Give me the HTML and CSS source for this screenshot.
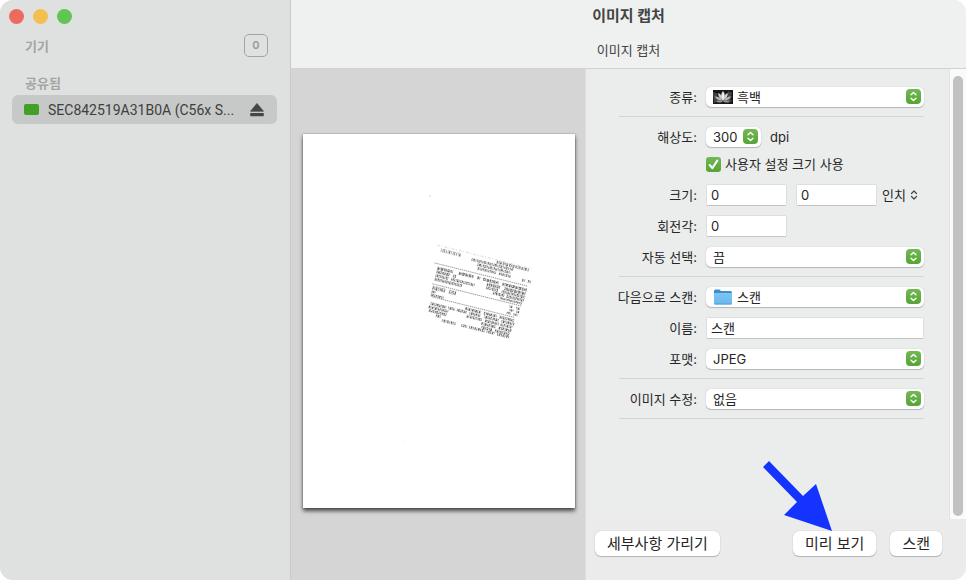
FILE: index.html
```html
<!DOCTYPE html>
<html lang="ko">
<head>
<meta charset="utf-8">
<title>이미지 캡처</title>
<link rel="stylesheet" href="styles.css">
</head>
<body>
<svg class="defs" width="0" height="0" aria-hidden="true">
  <defs>
    <linearGradient id="green" x1="0" y1="0" x2="0" y2="1"><stop offset="0" stop-color="#72b855"/><stop offset="1" stop-color="#56a535"/></linearGradient>
    <linearGradient id="blue" x1="0" y1="0" x2="0" y2="1"><stop offset="0" stop-color="#7cc5f3"/><stop offset="1" stop-color="#69b7ec"/></linearGradient>
    <pattern id="specks" width="7.300" height="3.900" patternUnits="userSpaceOnUse">
      <path d="M.3 1.200H1.800M2.600 2.400H3.700M4.200.6H5.300M5.800 1.900H7M1.200 3.300H2.200M4.500 3.200H6" stroke="#fff" stroke-width="1"/>
    </pattern>
    <symbol id="knob" viewBox="0 0 15 15">
      <rect width="15" height="15" rx="4" fill="url(#green)"/>
      <path d="M5 5.8 7.5 3.5 10 5.8M5 9.2l2.5 2.3L10 9.2" fill="none" stroke="#fff" stroke-width="1.4" stroke-linecap="round" stroke-linejoin="round"/>
    </symbol>
  </defs>
</svg>
<div class="window">
  <aside class="sidebar">
    <div class="lights">
      <button class="light close" aria-label="닫기"></button>
      <button class="light minimize" aria-label="최소화"></button>
      <button class="light expand" aria-label="확대"></button>
    </div>
    <div class="group-head"><h2>기기</h2><span class="count">0</span></div>
    <h2 class="shared">공유됨</h2>
    <div class="device">
      <span class="device-icon"></span>
      <span class="device-name">SEC842519A31B0A (C56x S...</span>
      <button class="eject" aria-label="추출">
        <svg width="14" height="14" viewBox="0 0 14 14"><path d="M7 .5 13.4 8.2H.6Z" fill="#454746" stroke="#454746" stroke-width=".8" stroke-linejoin="round"/><rect x=".2" y="10" width="13.6" height="3.2" rx=".6" fill="#454746"/></svg>
      </button>
    </div>
  </aside>

  <main class="main">
    <header class="titlebar">
      <h1>이미지 캡처</h1>
      <p>이미지 캡처</p>
    </header>
    <div class="content">
      <section class="preview" aria-label="스캔 미리 보기">
        <svg class="page" viewBox="0 0 272 374">
          <circle cx="127" cy="62" r=".6" fill="#aaa"/>
          <circle cx="102" cy="308" r=".4" fill="#bbb"/>
          <g transform="translate(134 111) rotate(14)" fill="none" stroke="#333" opacity=".78">
            <path d="M0 0H98" stroke="#aaa" stroke-width=".5" stroke-dasharray="3 1.5 1 2"/>
            <path d="M5 4H26" stroke-width="3.6" stroke-dasharray=".7 1.1 .6 .6 1.3 1" stroke="#444"/>
            <g stroke-width="2.8" stroke="#444">
              <path d="M62 2.2H95" stroke-dasharray="1.6 .6 .8 .5 2 .9"/>
              <path d="M37 5.6H80M44 9.2H78" stroke-dasharray="1.1 .5 2 .6 .7 .7"/>
              <path d="M45 12.8H64M67 12.8H79M91 13.4H94M97 13.4H100" stroke-dasharray="1.6 .6 .8 .5"/>
            </g>
            <g stroke-width="2.9" stroke="#222">
              <path d="M6 22.3H22M28 22H43M47 22H50M53 22H69M73 22H98" stroke-dasharray="1.8 .5 .8 .5 2.4 .6"/>
              <path d="M6 26H20M23 26H26M58 26H72M76 26H98" stroke-dasharray="1.1 .6 1.9 .5"/>
              <path d="M6 29.8H19M22 29.8H46M58 29.5H70M74 29.5H98" stroke-dasharray=".7 .6 1.4 .5 .8 .7"/>
              <path d="M6 33.6H34M66 33H78M80 33H98" stroke-dasharray="1.2 .6 .7 .5"/>
              <path d="M74 36.3H97" stroke-dasharray="1.7 .6 .7 .5" stroke-width="2"/>
            </g>
            <path d="M6 42.4H19M23 42.4H30" stroke-width="3.8" stroke-dasharray="1.2 .7 .7 .6 1.8 .8"/>
            <path d="M6 46.4H10M6 49.7H19M85 42H88M92 42H96M86 45.4H90M93 45.4H96M84 48.7H88M91 48.7H95" stroke-width="2.4" stroke-dasharray="1 .5 1.6 .5"/>
            <g stroke-width="2.8" stroke="#2a2a2a">
              <path d="M43 54.7H59M62 54.7H75M78 54.7H93" stroke-dasharray="1.5 .6 .8 .5"/>
              <path d="M8 58.2H24M26 58.2H33M35 58.2H45M48 58.2H59M63 58.2H78M81 58.2H94" stroke-dasharray=".8 .6 1.7 .6 1 .5"/>
              <path d="M7 61.8H27M46 61.8H62M65 61.8H79M81 61.8H93" stroke-dasharray="1.4 .5 .7 .6"/>
              <path d="M8 65.4H26M62 65.4H77M80 65.4H93" stroke-dasharray="1.8 .6 .8 .5"/>
              <path d="M16 68.8H21M63 69H74M77 69H92" stroke-dasharray="1 .6 1.6 .6"/>
              <path d="M23 72H37M43 72H49M51 72H67M69 72H77M80 72H92" stroke-dasharray=".8 .8 1.6 .6"/>
            </g>
            <rect y="1" width="102" height="74" fill="url(#specks)" stroke="none"/>
            <path d="M2 18H98M5 38.8H97M7 51.5H93" stroke="#666" stroke-width=".8" stroke-dasharray="1.3 .7"/>
          </g>
        </svg>
      </section>

      <section class="details">
        <div class="scroller">
          <form class="form" id="scan-form">
            <div class="group">
              <div class="row">
                <label for="kind">종류:</label>
                <div class="popup with-icon">
                  <select id="kind"><option>흑백</option></select>
                  <svg class="thumb" viewBox="0 0 20 14">
                    <rect width="20" height="14" fill="#171717"/>
                    <path d="M0 2 5 4 3 7 6 11 1 13ZM15 1l4 2-2 5 2 3-4 2Z" fill="#444"/>
                    <g fill="#bbb" stroke="#555" stroke-width=".3">
                      <path d="M10 11C6 11 3 9 1.5 6.500 5 6 8 8 10 11ZM10 11c4 0 7-2 8.500-4.500C15 6 12 8 10 11Z"/>
                      <path d="M10 11C7 9 5 6 5 3c3 1 5 4 5 8ZM10 11c3-2 5-5 5-8-3 1-5 4-5 8Z" fill="#ddd"/>
                      <path d="M10 11C7.500 8 7.500 4 10 1c2.500 3 2.500 7 0 10Z" fill="#eee"/>
                      <path d="M10 11c-2 2-5 2-7 0 3-1 5-1 7 0Zm0 0c2 2 5 2 7 0-3-1-5-1-7 0Z" fill="#999"/>
                    </g>
                  </svg>
                  <svg class="knob"><use href="#knob"/></svg>
                </div>
              </div>
            </div>

            <div class="group">
              <div class="row">
                <label for="resolution">해상도:</label>
                <div class="inline">
                  <div class="popup short">
                    <select id="resolution"><option>300</option></select>
                    <svg class="knob"><use href="#knob"/></svg>
                  </div>
                  <span>dpi</span>
                </div>
              </div>
              <div class="row check-row">
                <div class="check">
                  <input type="checkbox" id="custom" checked>
                  <svg class="tick" viewBox="0 0 15 15"><path d="m3.700 8 2.600 3.200 5-7.600" fill="none" stroke="#fff" stroke-width="2" stroke-linecap="round" stroke-linejoin="round"/></svg>
                  <label for="custom">사용자 설정 크기 사용</label>
                </div>
              </div>
              <div class="row">
                <label for="width">크기:</label>
                <div class="inline">
                  <input class="field number" id="width" type="text" value="0">
                  <input class="field number" type="text" value="0" aria-label="높이">
                  <div class="unit">
                    <select aria-label="단위"><option>인치</option></select>
                    <svg class="arrows" viewBox="0 0 8 10"><path d="M1.500 3.500 4 1l2.500 2.500M1.500 6.500 4 9l2.500-2.500" fill="none" stroke="#444" stroke-width="1.200" stroke-linecap="round" stroke-linejoin="round"/></svg>
                  </div>
                </div>
              </div>
              <div class="row">
                <label for="angle">회전각:</label>
                <div class="inline"><input class="field number" id="angle" type="text" value="0"></div>
              </div>
              <div class="row">
                <label for="auto">자동 선택:</label>
                <div class="popup">
                  <select id="auto"><option>끔</option></select>
                  <svg class="knob"><use href="#knob"/></svg>
                </div>
              </div>
            </div>

            <div class="group">
              <div class="row">
                <label for="target">다음으로 스캔:</label>
                <div class="popup with-icon">
                  <select id="target"><option>스캔</option></select>
                  <svg class="thumb" viewBox="0 0 20 16">
                    <path d="M1 2Q1 .5 2.500.5H6.500L8 2H17.500Q19 2 19 3.500V14H1Z" fill="#3c8fc9"/>
                    <path d="M1 4H19V14.500Q19 15.500 18 15.500H2Q1 15.500 1 14.500Z" fill="url(#blue)"/>
                    <path d="M1.500 15H18.500" stroke="#4a9bd2" stroke-width=".8"/>
                  </svg>
                  <svg class="knob"><use href="#knob"/></svg>
                </div>
              </div>
              <div class="row">
                <label for="name">이름:</label>
                <input class="field" id="name" type="text" value="스캔">
              </div>
              <div class="row">
                <label for="format">포맷:</label>
                <div class="popup">
                  <select id="format"><option>JPEG</option></select>
                  <svg class="knob"><use href="#knob"/></svg>
                </div>
              </div>
            </div>

            <div class="group">
              <div class="row">
                <label for="correction">이미지 수정:</label>
                <div class="popup">
                  <select id="correction"><option>없음</option></select>
                  <svg class="knob"><use href="#knob"/></svg>
                </div>
              </div>
            </div>
          </form>
          <div class="track"><div class="track-thumb"></div></div>
        </div>
        <footer class="actions">
          <button class="push">세부사항 가리기</button>
          <div class="actions-end">
            <div class="pointed">
              <button class="push">미리 보기</button>
              <svg class="pointer" viewBox="0 0 70 70" aria-hidden="true"><path d="M1 6 7 0 41 35 54 23 70 70 22 54 35 41Z" fill="#1433ff"/></svg>
            </div>
            <button class="push" form="scan-form">스캔</button>
          </div>
        </footer>
      </section>
    </div>
  </main>
</div>
</body>
</html>
```
FILE: styles.css
```css
* {
  box-sizing: border-box;
}

body {
  margin: 0;
  background: #fff;
  color: #262626;
  font: 13px/20px Inter, "Noto Sans CJK KR", sans-serif;
}

button,
input,
select {
  margin: 0;
  border: 0;
  padding: 0;
  color: inherit;
  font: inherit;
}

select,
input {
  appearance: none;
}

h1,
h2,
p {
  margin: 0;
}

svg {
  display: block;
}

.defs {
  position: absolute;
}

.window {
  display: grid;
  grid-template-columns: 291px 1fr;
  min-height: 100vh;
  overflow: hidden;
  border-radius: 13px;
  background: #ebebeb;
}

.sidebar {
  padding: 9px 13px 9px 12px;
  border-right: 1px solid #c9cbca;
  background: #dfe1e0;
}

.lights {
  display: flex;
  gap: 9px;
  margin-left: -3px;
}

.light {
  width: 15px;
  height: 15px;
  border-radius: 50%;
}

.close {
  background: #ee6a5f;
}

.minimize {
  background: #f5bf4f;
}

.expand {
  background: #61c554;
}

.sidebar h2 {
  color: #a3a5a4;
  font-size: 13px;
  font-weight: 600;
  line-height: 18px;
}

.group-head {
  display: flex;
  align-items: center;
  justify-content: space-between;
  margin-top: 10px;
  padding: 0 9px 0 13px;
}

.count {
  width: 24px;
  height: 23px;
  border: 1px solid #a3a5a4;
  border-radius: 5px;
  color: #989a99;
  font-size: 11px;
  font-weight: 600;
  line-height: 21px;
  text-align: center;
}

.sidebar .shared {
  margin-top: 17px;
  padding-left: 13px;
}

.device {
  display: flex;
  align-items: center;
  height: 29px;
  margin-top: 3px;
  padding: 0 13px 0 12px;
  border-radius: 6px;
  background: #c7c9c8;
}

.device-icon {
  width: 15px;
  height: 11px;
  margin-right: 9px;
  border-radius: 2px;
  background: #43a026;
}

.device-name {
  flex: 1;
  color: #3e403f;
  font-family: Roboto, "Noto Sans CJK KR", sans-serif;
  font-size: 14px;
  white-space: nowrap;
}

.eject {
  background: none;
}

.main {
  display: flex;
  flex-direction: column;
}

.titlebar {
  height: 69px;
  padding-top: 5px;
  border-bottom: 1px solid #d0d2d1;
  background: #eff1f0;
  color: #444;
  text-align: center;
}

.titlebar h1 {
  font-size: 15px;
  line-height: 22px;
}

.titlebar p {
  margin-top: 13px;
}

.content {
  display: grid;
  flex: 1;
  grid-template-columns: 295fr 380fr;
}

.preview {
  display: flex;
  align-items: center;
  padding: 0 10px 7px 12px;
  border-right: 1px solid #dedede;
  background: #d5d5d5;
}

.page {
  width: 100%;
  background: #fff;
  box-shadow: 0 3px 4px rgb(0 0 0 / 65%), 0 0 1px rgb(0 0 0 / 60%);
}

.details {
  display: flex;
  flex-direction: column;
}

.scroller {
  display: flex;
  flex: 1;
  margin-left: 8px;
  background: #ebedec;
}

.form {
  flex: 1;
  padding: 18px 25px 0;
}

.group {
  display: grid;
  gap: 11px;
  margin-bottom: 10px;
  padding-bottom: 9px;
  border-bottom: 1px solid #d3d5d4;
}

.row {
  display: grid;
  grid-template-columns: 78px 1fr;
  align-items: center;
  gap: 9px;
  height: 20px;
}

.row > label {
  justify-self: end;
  white-space: nowrap;
}

.check-row {
  margin-top: -4px;
}

.check {
  display: flex;
  position: relative;
  grid-column: 2;
  align-items: center;
  gap: 4px;
}

.check input {
  width: 15px;
  height: 15px;
  border-radius: 3px;
  background: linear-gradient(#72b855, #56a535);
}

.tick {
  position: absolute;
  top: 3px;
  left: 0;
  width: 15px;
  height: 15px;
  pointer-events: none;
}

.popup {
  position: relative;
}

.popup select {
  display: block;
  width: 100%;
  height: 20px;
  padding-left: 7px;
  border-radius: 5px;
  background: #fff;
  box-shadow: 0 1px 1px rgb(0 0 0 / 22%), 0 0 1px rgb(0 0 0 / 25%);
}

.popup.short {
  width: 55px;
}

.popup.with-icon select {
  padding-left: 31px;
}

.knob {
  position: absolute;
  top: 2px;
  right: 3px;
  width: 15px;
  height: 15px;
  pointer-events: none;
}

.thumb {
  position: absolute;
  top: 2px;
  left: 7px;
  width: 20px;
  height: 16px;
  pointer-events: none;
}

.inline {
  display: flex;
  align-items: center;
  gap: 9px;
}

.field {
  height: 20px;
  margin: 0 1px;
  padding: 0 4px;
  background: #fff;
  box-shadow: 0 1px 0 #c3c5c4, 0 0 1px rgb(0 0 0 / 35%);
}

.number {
  width: 79px;
}

.unit {
  position: relative;
  margin-left: -4px;
}

.unit select {
  width: 36px;
  background: none;
}

.arrows {
  position: absolute;
  top: 5px;
  right: 0;
  width: 8px;
  height: 10px;
  pointer-events: none;
}

.track {
  width: 17px;
  padding: 7px 3px 3px;
  border-left: 1px solid #e2e2e2;
  background: #fafafa;
}

.track-thumb {
  width: 10px;
  height: 100%;
  border-radius: 5px;
  background: #c1c1c1;
}

.actions {
  display: flex;
  justify-content: space-between;
  padding: 12px 24px 24px 9px;
}

.actions-end {
  display: flex;
  gap: 14px;
}

.push {
  height: 25px;
  padding: 0 12px;
  border-radius: 6px;
  background: #fff;
  box-shadow: 0 1px 1px rgb(0 0 0 / 22%), 0 0 1px rgb(0 0 0 / 25%);
  font-size: 15px;
  line-height: 22px;
}

.pointed {
  position: relative;
}

.pointer {
  position: absolute;
  right: 44px;
  bottom: 100%;
  width: 70px;
  height: 70px;
  pointer-events: none;
}
```
